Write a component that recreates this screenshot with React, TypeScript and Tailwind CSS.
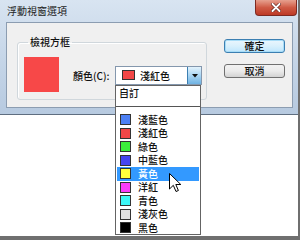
// Floating window options dialog (Win7 style) with the colour list open.

const COLORS = [
  { name: "淺藍色", hex: "#4d80f4" },
  { name: "淺紅色", hex: "#f24747" },
  { name: "綠色", hex: "#3cef3c" },
  { name: "中藍色", hex: "#4545ef" },
  { name: "黃色", hex: "#ffff3a" },
  { name: "洋紅", hex: "#fb3cfb" },
  { name: "青色", hex: "#3cf6f6" },
  { name: "淺灰色", hex: "#e2e2e2" },
  { name: "黑色", hex: "#000000" },
];

const SELECTED = "黃色";

export default function App() {
  return (
    <div className="relative w-[304px] h-[240px] bg-white overflow-hidden text-[10px] leading-[12px] font-medium text-[#111] font-['Noto_Sans_CJK_TC','Noto_Sans',sans-serif]">
      <div className="w-[300px] h-[240px] border-r-2 border-b-4 border-[#6f6f6f]">
        {/* Window frame */}
        <div className="w-[298px] h-[115px] flex flex-col bg-gradient-to-b from-[#d8e4f1] via-[#c6d6e8] to-[#b7cae0] border-b border-[#5f6e80]">
          {/* Title bar */}
          <div className="h-[22px] flex items-start justify-between pl-[7px] pr-[1px]">
            <span className="mt-[5px] text-[#222] font-normal">浮動視窗選項</span>
            <div className="w-[42px] h-[16px] flex items-center justify-center rounded-b-[4px] border border-t-0 border-[#7d2a22] bg-gradient-to-b from-[#e6a08f] via-[#cf5a45] to-[#bd3925]">
              <svg width="10" height="9" viewBox="0 0 10 9">
                <path d="M1.5 1 L8.5 8 M8.5 1 L1.5 8" stroke="#5a1a12" strokeWidth="3.2" strokeLinecap="round" />
                <path d="M1.5 1 L8.5 8 M8.5 1 L1.5 8" stroke="#fff" strokeWidth="2" strokeLinecap="round" />
              </svg>
            </div>
          </div>

          {/* Client area */}
          <div className="ml-[6px] mr-[5px] h-[86px] bg-[#f0f0f0] border border-[#8c9db1] flex items-start pl-[10px]">
            {/* Group box */}
            <fieldset className="mt-[13px] w-[190px] h-[64px] border border-[#d0d7dc] rounded-[3px] shadow-[inset_1px_1px_0_#fff]">
              <legend className="ml-[10px] px-[2px]">檢視方框</legend>
              <div className="flex items-start pt-[9px] pl-[6px]">
                <div className="w-[35px] h-[35px] bg-[#f74848]" />
                <span className="ml-[14px] mt-[13px] w-[42px]">顏色(C):</span>
                <div className="mt-[9px] w-[87px] h-[19px] flex bg-white border border-[#8497ad]">
                  <div className="w-[13px] h-[10px] mt-[3px] ml-[6px] bg-[#f24747] border border-[#333]" />
                  <span className="ml-[5px] mt-[3px]">淺紅色</span>
                  <div className="ml-auto w-[14px] h-full flex items-center justify-center border-l border-[#3c7fb1] bg-gradient-to-b from-[#e3f3fc] via-[#a9d5f3] to-[#6fb3e3]">
                    <svg width="6" height="4" viewBox="0 0 6 4">
                      <path d="M0 0 H6 L3 3.5 Z" fill="#111" />
                    </svg>
                  </div>
                </div>
              </div>
            </fieldset>

            {/* Buttons */}
            <div className="ml-[17px] mt-[16px] flex flex-col gap-[11px]">
              <button className="w-[61px] h-[14px] flex items-center justify-center rounded-[3px] border border-[#3c7fb1] bg-gradient-to-b from-[#eaf6fd] via-[#d9f0fc] to-[#bee6fd] shadow-[inset_0_0_0_1px_#a7dcf7]">
                確定
              </button>
              <button className="w-[61px] h-[14px] flex items-center justify-center rounded-[3px] border border-[#707070] bg-gradient-to-b from-[#f2f2f2] via-[#ebebeb] to-[#d3d3d3]">
                取消
              </button>
            </div>
          </div>
        </div>
      </div>

      {/* Dropdown list */}
      <div className="absolute left-[115px] top-[85px] w-[86px] h-[150px] bg-white border border-[#646464]">
        <div className="pt-[1px] pl-[3px]">自訂</div>
        <div className="mt-[7px] h-px bg-[#555]" />
        <div className="mt-[6px]">
          {COLORS.map((c) => (
            <div
              key={c.name}
              className={
                c.name === SELECTED
                  ? "mx-px h-[13.5px] flex items-center pl-[3px] bg-[#3399ff] text-white"
                  : "mx-px h-[13.5px] flex items-center pl-[3px]"
              }
            >
              <div className="w-[11px] h-[11px] border border-[#333]" style={{ backgroundColor: c.hex }} />
              <span className="ml-[7px]">{c.name}</span>
            </div>
          ))}
        </div>
      </div>

      {/* Mouse pointer */}
      <svg className="absolute left-[169px] top-[173px]" width="13" height="20" viewBox="0 0 13 20">
        <path d="M0.5 0.5 L0.5 16 L4.3 12.3 L7 18.5 L9.4 17.5 L6.8 11.5 L11.8 11.5 Z" fill="#fff" stroke="#000" strokeWidth="1" strokeLinejoin="round" />
      </svg>
    </div>
  );
}
